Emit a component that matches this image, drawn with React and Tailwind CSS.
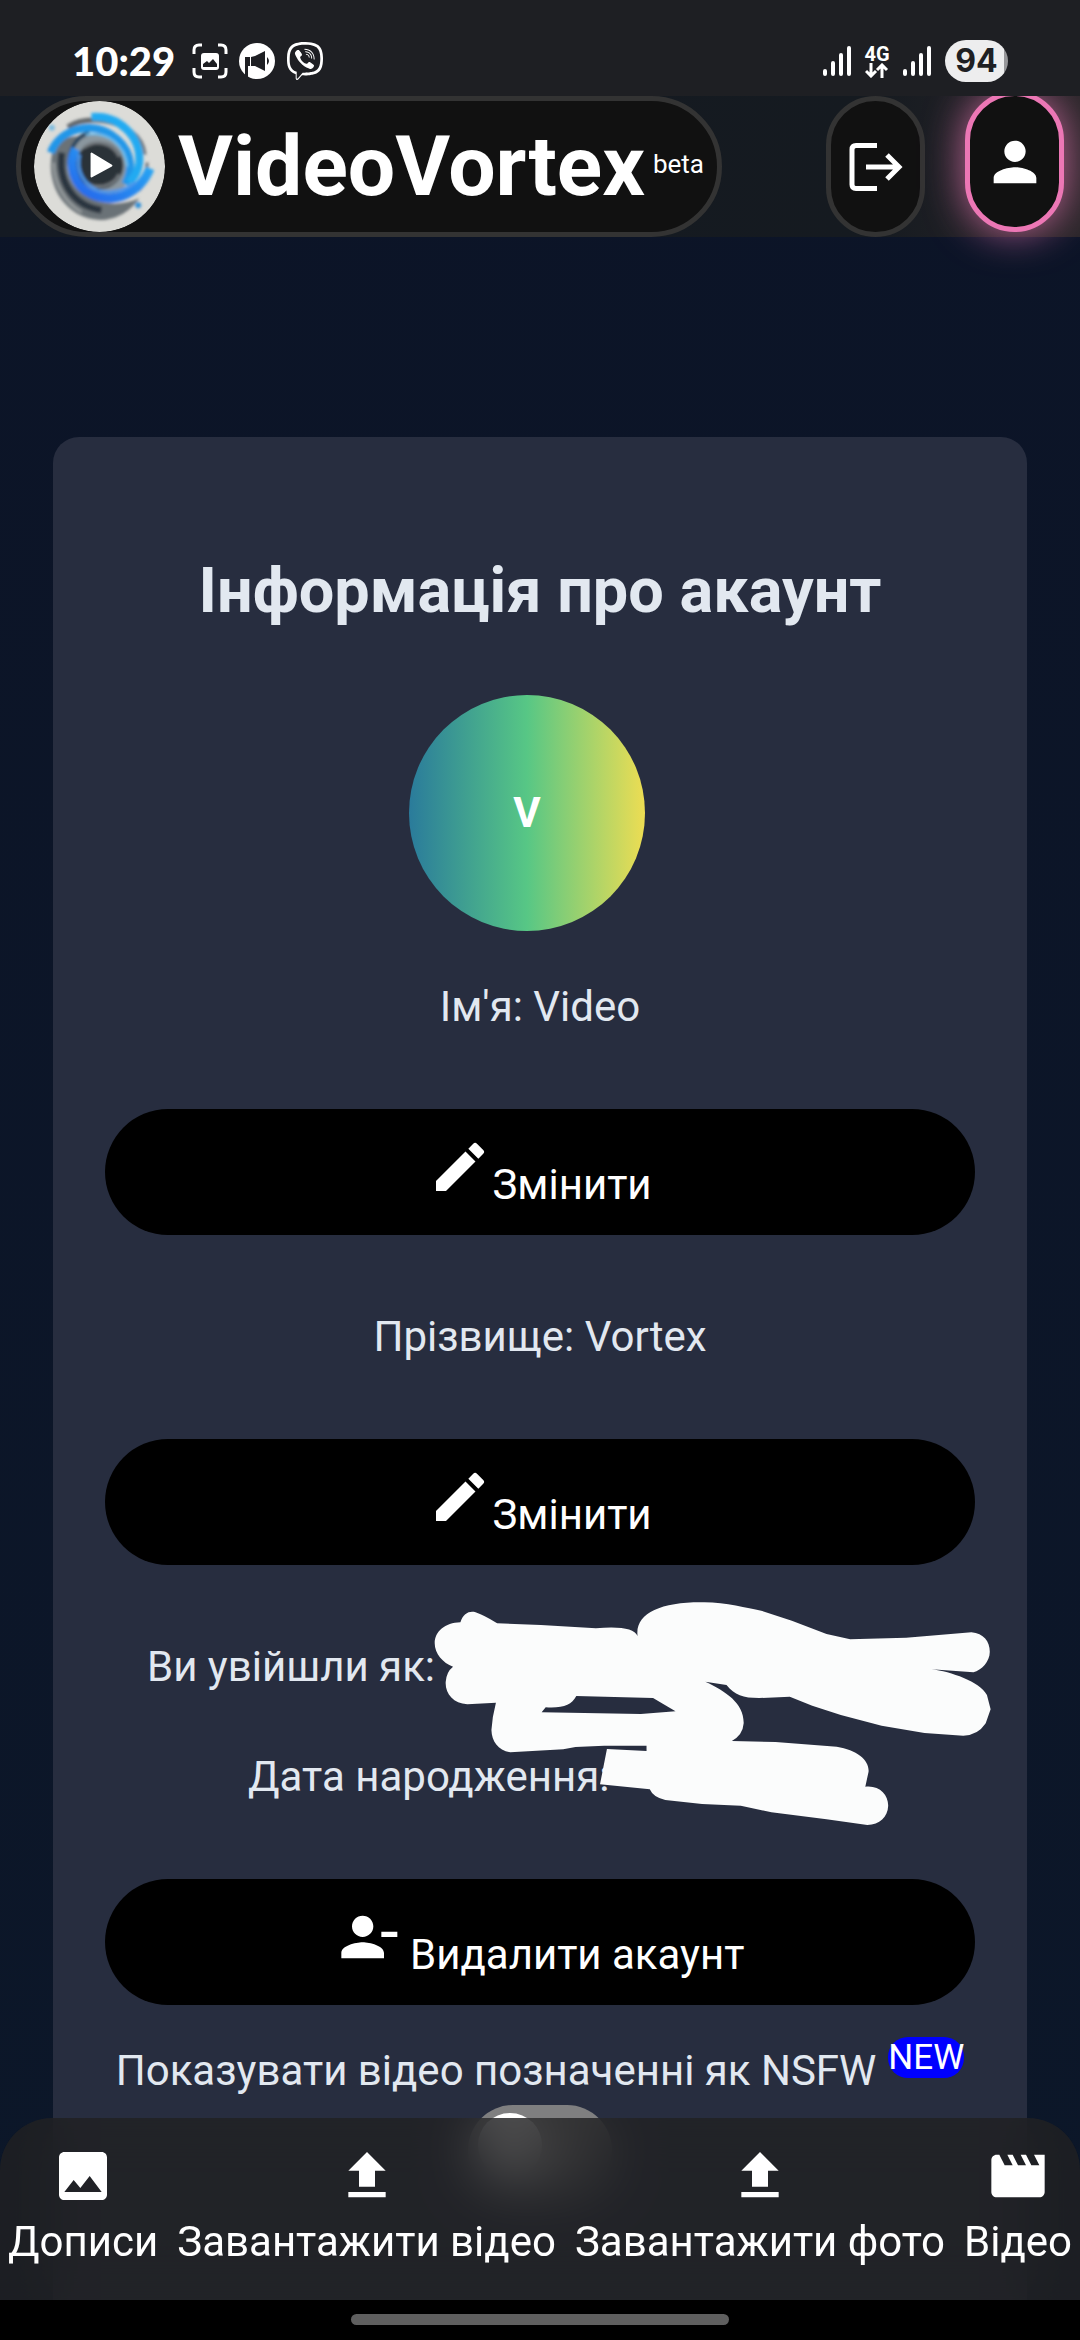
import {
  MdEdit,
  MdFileUpload,
  MdImage,
  MdMovie,
  MdPerson,
  MdPersonRemove,
} from 'react-icons/md';
import { FaViber } from 'react-icons/fa';

const navItems = [
  { label: 'Дописи', Icon: MdImage },
  { label: 'Завантажити відео', Icon: MdFileUpload },
  { label: 'Завантажити фото', Icon: MdFileUpload },
  { label: 'Відео', Icon: MdMovie },
];

function Signal() {
  return (
    <svg viewBox="0 0 28 30" className="w-7 h-[30px]" stroke="#fff" strokeWidth="4" strokeLinecap="round" aria-hidden="true">
      <path d="M2 25v3M10 17v11M18 9v19M26 2v26" />
    </svg>
  );
}

function StatusBar() {
  return (
    <div className="relative z-20 h-24 shrink-0 bg-[#1e1f23] text-white flex items-start justify-between px-[72px] pt-10">
      <div className="flex items-center gap-[11px] h-[42px]">
        <span className="font-[Lato] font-black text-[40px] leading-[42px] mr-[6px]">10:29</span>
        <svg viewBox="0 0 36 36" className="size-9" fill="none" aria-hidden="true">
          <path d="M2 11V7q0-5 5-5h3M26 2h3q5 0 5 5v4M34 25v4q0 5-5 5h-3M10 34H7q-5 0-5-5v-4" stroke="#fff" strokeWidth="3" />
          <rect x="9" y="10" width="18" height="17" rx="3" fill="#fff" />
          <path d="M11 24v-3l4-3 2 2 4-4 4 5v3z" fill="#1e1f23" />
        </svg>
        <svg viewBox="0 0 36 36" className="size-9" aria-hidden="true">
          <circle cx="18" cy="18" r="18" fill="#fff" />
          <path d="M6 14h5v9H9v12l-3-3zM12 14l4-1 10-5v20l-10-5h-4zM28 14q4 4 0 8z" fill="#1e1f23" />
        </svg>
        <FaViber className="size-[38px]" aria-hidden="true" />
      </div>
      <div className="flex items-center gap-[14px] h-[42px]">
        <Signal />
        <div className="flex flex-col items-center w-6">
          <span className="font-bold text-[20px] leading-[18px]">4G</span>
          <svg viewBox="0 0 24 15" className="w-6 h-[15px]" fill="none" stroke="#fff" strokeWidth="3" aria-hidden="true">
            <path d="M6 0v13M1 8l5 5 5-5M17 15V2M12 7l5-5 5 5" />
          </svg>
        </div>
        <Signal />
        <span className="w-[63px] h-[42px] rounded-full bg-linear-to-r from-[#ededee] from-94% to-[#97979a] to-94% text-[#1e1f23] font-[Inter] font-bold text-[32px] leading-[42px] text-center">
          94
        </span>
      </div>
    </div>
  );
}

function VortexLogo() {
  return (
    <svg viewBox="0 0 132 132" className="size-[131px] rounded-full" fill="none" aria-hidden="true">
      <defs>
        <linearGradient id="vortexBlue" x1="1" y1="0" x2="0" y2="1">
          <stop offset="0" stopColor="#25b4f5" />
          <stop offset="1" stopColor="#2563eb" />
        </linearGradient>
        <filter id="vortexSoft" x="-10%" y="-10%" width="120%" height="120%">
          <feGaussianBlur stdDeviation="1.6" />
        </filter>
      </defs>
      <circle cx="66" cy="66" r="66" fill="#dcdcd8" />
      <g filter="url(#vortexSoft)">
        <path d="M18 54C12 86 32 118 66 120C84 120 98 110 106 98C84 108 58 104 46 88C36 74 34 50 48 36C32 34 20 42 18 54Z" fill="#6b7277" />
        <path d="M28 52C24 82 40 106 68 110" stroke="#2c3640" strokeWidth="7" />
        <path d="M20 62C20 82 30 102 48 112" stroke="#a0a5a6" strokeWidth="2" />
        <path d="M34 26C50 16 74 18 90 26" stroke="#62686c" strokeWidth="5" />
        <path d="M98 30C106 36 111 44 112 54M114 62C114 74 112 82 106 90" stroke="#70767a" strokeWidth="3" />
        <circle cx="66" cy="65" r="33" fill="#8b979f" />
        <circle cx="66" cy="65" r="24" fill="#2b3138" />
        <path d="M50 47C62 38 80 42 86 56M86 74C80 86 64 90 52 82" stroke="#73797e" strokeWidth="3" />
        <path d="M36 66C34 50 42 36 56 32" stroke="#28455f" strokeWidth="4" />
        <path d="M17 52C26 28 58 20 78 34C96 46 102 64 92 84" stroke="#2296e8" strokeWidth="8" />
        <path d="M58 16C86 14 108 36 106 62C105 72 100 78 96 82" stroke="#21aaf2" strokeWidth="8" />
        <path d="M52 34C74 30 92 44 94 66" stroke="#6cc4f4" strokeWidth="2" />
        <path d="M42 48C34 64 40 86 58 94C80 104 106 94 117 68" stroke="url(#vortexBlue)" strokeWidth="9" />
        <path d="M46 54C42 70 50 84 64 90C78 94 92 90 102 82" stroke="#4e97ea" strokeWidth="3" />
        <circle cx="18" cy="27" r="3" fill="#7bbce0" />
        <circle cx="105" cy="105" r="3" fill="#3291d8" />
      </g>
      <path d="M58 53v23l20-11z" fill="#fff" stroke="#fff" strokeWidth="2" strokeLinejoin="round" />
    </svg>
  );
}

function Header() {
  return (
    <header className="relative z-10 shrink-0 flex items-start justify-between px-4 bg-linear-to-r from-[#141a23] via-[#151a20] via-80% to-[#292629]">
      <a href="#" className="flex items-center gap-[13px] h-[141px] px-[13px] rounded-full border-[5px] border-[#333] bg-[#111] text-white">
        <VortexLogo />
        <span className="flex items-center gap-2">
          <span className="font-bold text-[84px] leading-[131px]">VideoVortex</span>
          <sup className="static pb-[5px] text-[26px] leading-none">beta</sup>
        </span>
      </a>
      <div className="flex gap-10">
        <button type="button" aria-label="Вийти" className="flex items-center justify-center w-[99px] h-[141px] rounded-full border-[5px] border-[#333] bg-[#111]">
          <svg viewBox="0 0 54 48" className="w-[54px] h-12" fill="none" stroke="#fff" strokeWidth="5" aria-hidden="true">
            <path d="M28 2.5H7Q3 2.5 3 6.500v35Q3 45.500 7 45.500h21" />
            <path d="M17 24h33M38 12l12 12-12 12" />
          </svg>
        </button>
        <button
          type="button"
          aria-label="Профіль"
          className="flex items-center justify-center w-[99px] h-[141px] -mt-[5px] rounded-full border-[5px] border-[#ec77b5] bg-[#111] text-white shadow-[0_0_40px_rgba(236,119,181,0.8)]"
        >
          <MdPerson className="size-16" />
        </button>
      </div>
    </header>
  );
}

function PillButton({ children }) {
  return (
    <button type="button" className="block w-full py-[26px] rounded-full bg-black text-white text-[42px] leading-[48px]">
      {children}
    </button>
  );
}

function Scribble() {
  return (
    <svg viewBox="0 0 1568 840" preserveAspectRatio="none" className="absolute left-[295px] -top-[63px] w-[640px] h-[280px] max-w-none" aria-hidden="true">
      <path
        fill="#fbfcfc"
        fillRule="evenodd"
        d="M85 220C85 185 110 158 148 157C155 130 170 122 185 127Q205 135 238 160L345 165L480 175Q570 165 582 198C575 130 640 95 745 97C800 97 850 115 885 122L960 152L1045 192L1103 208L1240 203L1400 187C1430 190 1445 215 1445 245C1445 275 1425 300 1405 307L1302 298C1350 305 1420 335 1438 375L1447 418L1435 460Q1415 497 1380 497L1285 489L1180 467L1080 435L1010 407L955 380L880 384C840 384 820 375 800 345L748 335C800 365 843 400 842 460Q840 495 813 513L920 516L1070 530C1120 540 1150 570 1148 605L1140 650C1175 645 1197 675 1196 708C1195 740 1175 765 1145 765L1045 748L910 727L835 707L740 702L650 690Q620 682 612 658L490 643L507 537L604 543V527L500 527L430 531L400 538L270 547C240 540 225 515 224 480Q226 440 235 398L165 403C130 400 110 370 112 335Q114 305 130 290C105 280 85 250 85 220ZM432 378L620 384L675 424L590 432L347 427L357 412C400 415 420 405 432 378Z"
      />
    </svg>
  );
}

function AccountCard() {
  return (
    <section className="mx-[53px] mt-[200px] px-[52px] pt-[104px] pb-[400px] rounded-[26px] bg-[#272d3f] text-[#e2e8f0] text-[42px] leading-[68px] text-center">
      <h2 className="font-bold text-[63px] leading-[100px]">Інформація про акаунт</h2>
      <div className="flex justify-center pr-[26px] mt-[54px]">
        <div className="flex items-center justify-center size-[236px] rounded-full bg-[linear-gradient(90deg,#2a7b9b_0%,#57c785_50%,#eddd53_100%)] text-white font-bold">
          V
        </div>
      </div>

      <p className="mt-[42px] mb-[68px]">Ім'я: Video</p>
      <PillButton>
        <MdEdit className="inline align-baseline size-16" aria-hidden="true" />
        Змінити
      </PillButton>

      <p className="my-[68px]">Прізвище: Vortex</p>
      <PillButton>
        <MdEdit className="inline align-baseline size-16" aria-hidden="true" />
        Змінити
      </PillButton>

      <div className="relative my-[68px] text-left">
        <p className="pl-[42px] mb-[42px]">Ви увійшли як:</p>
        <p className="pl-[143px]">Дата народження:</p>
        <Scribble />
      </div>

      <PillButton>
        <MdPersonRemove className="inline align-baseline size-16" aria-hidden="true" />
        {' '}Видалити акаунт
      </PillButton>

      <div className="mt-8">
        <label htmlFor="nsfw" className="flex items-start justify-center gap-[12px] whitespace-nowrap">
          Показувати відео позначенні як NSFW
          <sup className="static text-[35px] leading-[41px] text-white bg-[#00f] rounded-[20px]">NEW</sup>
        </label>
        <input
          id="nsfw"
          type="checkbox"
          className="block mx-auto appearance-none w-36 h-[90px] rounded-full bg-[#7f7f80] before:block before:size-16 before:mt-2 before:ml-[10px] before:rounded-full before:bg-white"
        />
      </div>
    </section>
  );
}

function BottomNav() {
  return (
    <nav className="fixed inset-x-0 bottom-0 z-20">
      <div className="flex justify-between px-2 pt-[26px] pb-[25px] rounded-t-[52px] bg-[#202122]/80 backdrop-blur-[26px] text-white">
        {navItems.map(({ label, Icon }) => (
          <a key={label} href="#" className="flex flex-col items-center text-[42px] leading-[67px] whitespace-nowrap">
            <Icon className="size-16" aria-hidden="true" />
            {label}
          </a>
        ))}
      </div>
      <div className="h-10 pt-[14px] bg-black">
        <div className="w-[35%] h-[11px] mx-auto rounded-full bg-[#5f5f5f]" />
      </div>
    </nav>
  );
}

export default function App() {
  return (
    <div className="h-screen flex flex-col overflow-hidden bg-linear-to-b from-[#0c1427] to-[#0c1729] font-[Roboto,sans-serif]">
      <StatusBar />
      <Header />
      <main className="flex-1 min-h-0 overflow-hidden">
        <AccountCard />
      </main>
      <BottomNav />
    </div>
  );
}
